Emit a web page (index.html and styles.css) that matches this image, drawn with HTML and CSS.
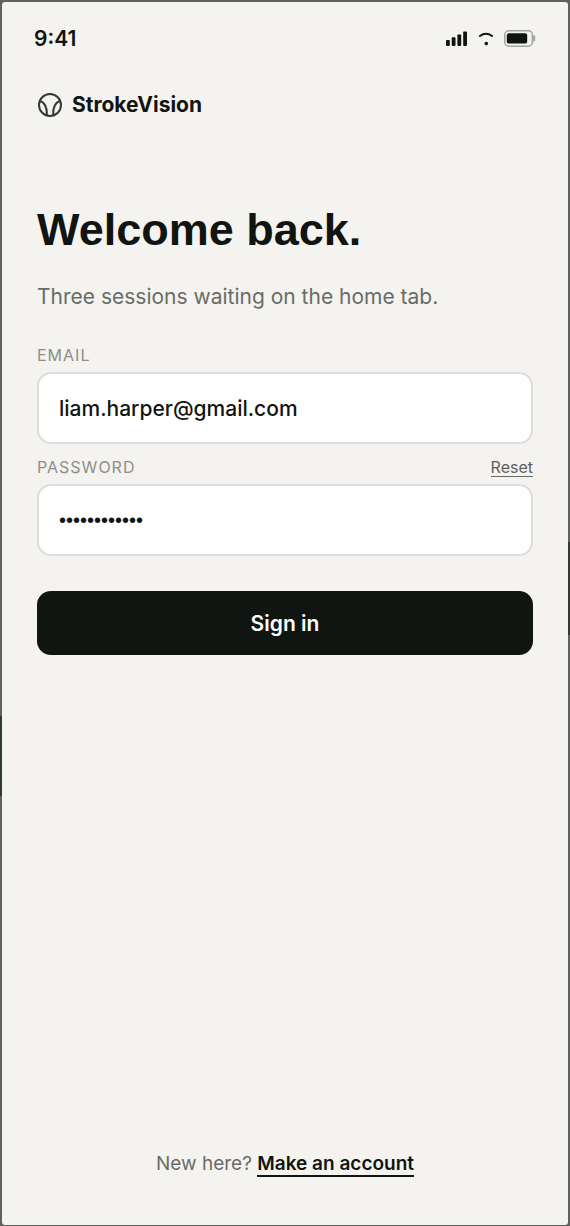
FILE: index.html
```html
<!DOCTYPE html>
<html lang="en">
<head>
<meta charset="utf-8">
<meta name="viewport" content="width=device-width, initial-scale=1">
<title>StrokeVision – Sign in</title>
<link rel="stylesheet" href="styles.css">
</head>
<body class="backdrop">
<div class="screen">
  <div class="status-bar">
    <span class="status-time">9:41</span>
    <div class="status-icons">
      <svg width="22" height="16" viewBox="0 0 22 16" fill="#101511" aria-hidden="true">
        <rect x="0" y="8.9" width="3.8" height="6" rx=".8"/>
        <rect x="5.7" y="6.2" width="3.8" height="8.7" rx=".8"/>
        <rect x="11.4" y="3.4" width="3.8" height="11.5" rx=".8"/>
        <rect x="17.2" y="0.4" width="3.8" height="14.5" rx=".8"/>
      </svg>
      <svg width="16" height="16" viewBox="0 0 16 16" fill="none" aria-hidden="true">
        <path d="M1.9 5Q8 .6 14.1 5" stroke="#101511" stroke-width="2" stroke-linecap="round"/>
        <circle cx="8.3" cy="12.6" r="1.8" fill="#101511"/>
      </svg>
      <svg width="32" height="18" viewBox="0 0 32 18" fill="none" aria-hidden="true">
        <rect x="0.8" y="0.8" width="27.6" height="15.4" rx="4" stroke="#a4a6a3" stroke-width="1.6"/>
        <rect x="2.8" y="3.2" width="20.4" height="10.4" rx="2.2" fill="#101511"/>
        <path d="M28.8 5.6h1.4q1 0 1 1v3.6q0 1-1 1h-1.4z" fill="#a4a6a3"/>
      </svg>
    </div>
  </div>

  <main class="content">
    <header class="brand">
      <svg width="26" height="26" viewBox="0 0 26 26" fill="none" stroke="#313b34" stroke-width="2" aria-hidden="true">
        <circle cx="13" cy="13" r="11"/>
        <path d="M2.8 8.8C7.8 10.6 10.3 15.5 9.8 23.4M23.2 8.8C18.2 10.6 15.7 15.5 16.2 23.4"/>
      </svg>
      <span class="brand-name">StrokeVision</span>
    </header>

    <h1 class="title">Welcome back.</h1>
    <p class="subtitle">Three sessions waiting on the home tab.</p>

    <form class="form">
      <div class="field-head">
        <label class="label" for="email">EMAIL</label>
      </div>
      <input class="input" id="email" type="email" value="liam.harper@gmail.com">
      <div class="field-head">
        <label class="label" for="password">PASSWORD</label>
        <a class="reset" href="#reset">Reset</a>
      </div>
      <input class="input input-password" id="password" type="password" value="backhand2024">
      <button class="submit" type="submit">Sign in</button>
    </form>

    <footer class="signup">New here? <a class="signup-link" href="#signup">Make an account</a></footer>
  </main>
</div>
</body>
</html>
```
FILE: styles.css
```css
* {
  box-sizing: border-box;
}

.backdrop {
  display: flex;
  min-height: 100vh;
  margin: 0;
  padding: 2px 2px 1px;
  font-family: Inter, "Liberation Sans", sans-serif;
  color: #101511;
  background:
    linear-gradient(#303b34, #303b34) 0 716px / 2px 80px no-repeat,
    linear-gradient(#303b34, #303b34) 100% 542px / 2px 93px no-repeat,
    #5f625c;
}

.screen {
  display: flex;
  flex: 1;
  flex-direction: column;
  border-radius: 3px;
  background: #f5f3ef;
}

.status-bar {
  display: flex;
  align-items: center;
  justify-content: space-between;
  padding: 23px 32px 0;
}

.status-time {
  font-size: 21px;
  font-weight: 600;
  line-height: 28px;
}

.status-icons {
  display: flex;
  align-items: center;
  gap: 10px;
}

.content {
  display: flex;
  flex: 1;
  flex-direction: column;
  padding: 38px 35px 48px;
}

.brand {
  display: flex;
  align-items: center;
  gap: 9px;
}

.brand-name {
  font-size: 21px;
  font-weight: 700;
  line-height: 28px;
}

.title {
  margin: 83px 0 0;
  font-family: "Liberation Sans", Arial, sans-serif;
  font-size: 45px;
  font-weight: 700;
  line-height: 56px;
}

.subtitle {
  margin: 25px 0 0;
  font-size: 21px;
  line-height: 28px;
  color: #686c67;
}

.form {
  display: flex;
  flex-direction: column;
  margin-top: 32px;
}

.field-head {
  display: flex;
  align-items: center;
  justify-content: space-between;
  height: 24px;
  margin-bottom: 5px;
}

.label {
  font-size: 16px;
  letter-spacing: 1px;
  color: #8b8f89;
}

.reset {
  border-bottom: 1px solid #686c67;
  font-size: 16px;
  line-height: 18px;
  color: #5d615c;
  text-decoration: none;
}

.input {
  width: 100%;
  height: 72px;
  margin-bottom: 11px;
  padding: 0 20px;
  border: 2px solid #dedddA;
  border-radius: 14px;
  font: 500 21px Inter, "Liberation Sans", sans-serif;
  color: #101511;
  background: #fff;
}

.input-password {
  font: 20px "Liberation Sans", Arial, sans-serif;
}

.submit {
  height: 64px;
  margin-top: 24px;
  border: 0;
  border-radius: 14px;
  font: 600 21px Inter, "Liberation Sans", sans-serif;
  color: #fff;
  background: #101511;
}

.signup {
  margin-top: auto;
  font-size: 19px;
  line-height: 26px;
  text-align: center;
  color: #686c67;
}

.signup-link {
  border-bottom: 2px solid #101511;
  font-weight: 600;
  color: #101511;
  text-decoration: none;
}
```
